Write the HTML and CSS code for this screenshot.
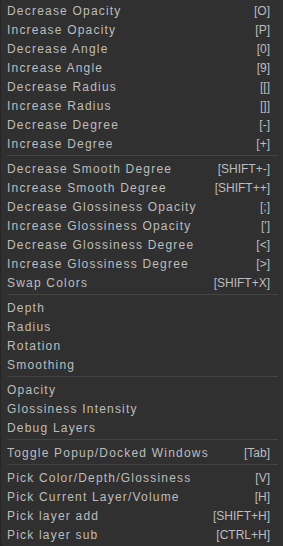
FILE: index.html
```html
<!DOCTYPE html>
<html lang="en">
<head>
<title>Shortcuts Menu</title>
<meta charset="UTF-8">
<link rel="stylesheet" href="styles.css">
</head>
<body>
  <div class="menu">
    <div class="row"><span>Decrease Opacity</span><span class="key">[O]</span></div>
    <div class="row"><span>Increase Opacity</span><span class="key">[P]</span></div>
    <div class="row"><span>Decrease Angle</span><span class="key">[0]</span></div>
    <div class="row"><span>Increase Angle</span><span class="key">[9]</span></div>
    <div class="row"><span>Decrease Radius</span><span class="key">[[]</span></div>
    <div class="row"><span>Increase Radius</span><span class="key">[]]</span></div>
    <div class="row"><span>Decrease Degree</span><span class="key">[-]</span></div>
    <div class="row"><span>Increase Degree</span><span class="key">[+]</span></div>
    <div class="sep"></div>
    <div class="row"><span>Decrease Smooth Degree</span><span class="key">[SHIFT+-]</span></div>
    <div class="row"><span>Increase Smooth Degree</span><span class="key">[SHIFT++]</span></div>
    <div class="row"><span>Decrease Glossiness Opacity</span><span class="key">[;]</span></div>
    <div class="row"><span>Increase Glossiness Opacity</span><span class="key">[']</span></div>
    <div class="row"><span>Decrease Glossiness Degree</span><span class="key">[&lt;]</span></div>
    <div class="row"><span>Increase Glossiness Degree</span><span class="key">[&gt;]</span></div>
    <div class="row"><span>Swap Colors</span><span class="key">[SHIFT+X]</span></div>
    <div class="sep"></div>
    <div class="row"><span>Depth</span></div>
    <div class="row"><span>Radius</span></div>
    <div class="row"><span>Rotation</span></div>
    <div class="row"><span>Smoothing</span></div>
    <div class="sep"></div>
    <div class="row"><span>Opacity</span></div>
    <div class="row"><span>Glossiness Intensity</span></div>
    <div class="row"><span>Debug Layers</span></div>
    <div class="sep"></div>
    <div class="row"><span>Toggle Popup/Docked Windows</span><span class="key">[Tab]</span></div>
    <div class="sep"></div>
    <div class="row"><span>Pick Color/Depth/Glossiness</span><span class="key">[V]</span></div>
    <div class="row"><span>Pick Current Layer/Volume</span><span class="key">[H]</span></div>
    <div class="row"><span>Pick layer add</span><span class="key">[SHIFT+H]</span></div>
    <div class="row"><span>Pick layer sub</span><span class="key">[CTRL+H]</span></div>
  </div>
</body>
</html>
```

FILE: styles.css
```css
body {
    margin: 0;
    background-color: #262626;
    font-family: "Liberation Sans", Arial, sans-serif;
    font-size: 12px;
    color: #bdbdbd;
}
.menu {
    height: 546px;
    box-sizing: border-box;
    padding: 2px 0 0 0;
    background-color: #303030;
    border-left: 1px solid #262626;
    border-bottom-left-radius: 4px;
}
.row {
    display: flex;
    justify-content: space-between;
    height: 19px;
    line-height: 19px;
    padding: 0 13px 0 6px;
    letter-spacing: 1.2px;
    white-space: nowrap;
}
.key {
    letter-spacing: 0;
}
.sep {
    height: 1px;
    margin: 1px 5px 4px 6px;
    background-color: #444444;
}
```
